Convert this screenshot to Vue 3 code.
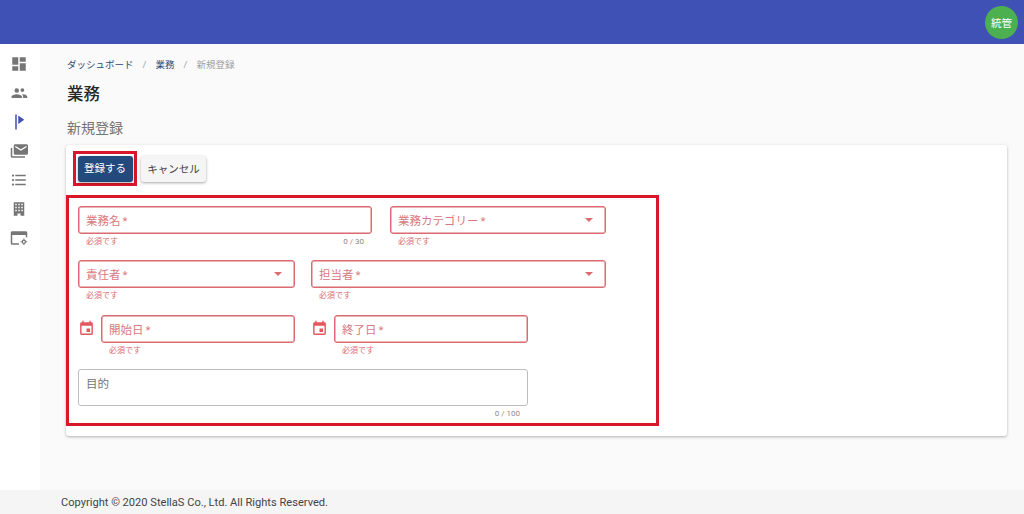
<template>
  <div class="page">
    <header class="topbar">
      <div class="avatar">統管</div>
    </header>
    <div class="body">
      <aside class="sidebar">
        <svg v-for="icon in navIcons" :key="icon.d" viewBox="0 0 24 24" class="navIcon" :class="{ active: icon.active }">
          <path :d="icon.d" />
        </svg>
      </aside>
      <main class="content">
        <nav class="crumbs">
          <a>ダッシュボード</a>
          <span class="sep">/</span>
          <a>業務</a>
          <span class="sep">/</span>
          <span class="current">新規登録</span>
        </nav>
        <h1 class="title">業務</h1>
        <h2 class="subtitle">新規登録</h2>
        <section class="card">
          <div class="actions">
            <div class="mark">
              <button class="btn primary">登録する</button>
            </div>
            <button class="btn">キャンセル</button>
          </div>
          <form class="form">
            <div v-for="(row, i) in rows" :key="i" class="row">
              <div v-for="field in row" :key="field.label" class="cell" :style="{ marginLeft: field.gap + 'px' }">
                <svg v-if="field.date" viewBox="0 0 24 24" class="calendar">
                  <path :d="calendarPath" />
                </svg>
                <div class="fieldWrap" :style="{ width: field.width + 'px' }">
                  <div class="field" :class="{ invalid: field.required, tall: field.tall }">
                    <span class="label">{{ field.label }}<em v-if="field.required">*</em></span>
                    <span v-if="field.select" class="caret"></span>
                  </div>
                  <div class="hints">
                    <span class="error">{{ field.required ? '必須です' : '' }}</span>
                    <span v-if="field.counter" class="counter">{{ field.counter }}</span>
                  </div>
                </div>
              </div>
            </div>
          </form>
        </section>
      </main>
    </div>
    <footer class="footer">Copyright © 2020 StellaS Co., Ltd. All Rights Reserved.</footer>
  </div>
</template>

<script setup>
const navIcons = [
  { d: 'M3 13h8V3H3v10zm0 8h8v-6H3v6zm10 0h8V11h-8v10zm0-18v6h8V3h-8z' },
  { d: 'M9 11.5a3 3 0 1 0 0-6 3 3 0 0 0 0 6zm7.5-1a2.500 2.500 0 1 0 0-5 2.500 2.500 0 0 0 0 5zM2 18.500V17c0-2.200 4.500-3.500 7-3.500s7 1.300 7 3.500v1.500H2zm15.500 0V17c0-1.300-.7-2.400-1.800-3.200.4-.1.800-.1 1-.1 2.300 0 6.300 1.100 6.300 3.300v1.500h-5.500z' },
  { d: 'M7 2h2v20H7V2zm12 7l-8 5.600V3.400L19 9z', active: true },
  { d: 'M22 3H7c-1.100 0-2 .9-2 2v10c0 1.100.9 2 2 2h15c1.100 0 2-.9 2-2V5c0-1.100-.9-2-2-2zm0 4l-7.500 4.800L7 7V5l7.500 4.800L22 5v2zM3 19h17v2H3c-1.100 0-2-.9-2-2V8h2v11z' },
  { d: 'M7 5h14v2H7V5zm0 8v-2h14v2H7zM4 4.500a1.500 1.500 0 1 1 0 3 1.500 1.500 0 0 1 0-3zm0 6a1.500 1.500 0 1 1 0 3 1.500 1.500 0 0 1 0-3zM7 19v-2h14v2H7zm-3-2.500a1.500 1.500 0 1 1 0 3 1.500 1.500 0 0 1 0-3z' },
  { d: 'M5 3h14v18h-5v-3h-4v3H5V3zm2 2v2h2V5H7zm4 0v2h2V5h-2zm4 0v2h2V5h-2zM7 9v2h2V9H7zm4 0v2h2V9h-2zm4 0v2h2V9h-2zM7 13v2h2v-2H7zm4 0v2h2v-2h-2zm4 0v2h2v-2h-2z' },
  { d: 'M21 3H3c-1.100 0-2 .9-2 2v14c0 1.100.9 2 2 2h9v-2H3V8h18v3h2V5c0-1.100-.9-2-2-2zm-2.500 11a3 3 0 1 0 0 6 3 3 0 0 0 0-6zm0 4.300a1.300 1.300 0 1 1 0-2.600 1.300 1.300 0 0 1 0 2.600zM17.700 12.600h1.600v1.600h-1.600zM17.700 19.800h1.600v1.600h-1.600zM14.100 16.200h1.600v1.600h-1.600zM21.300 16.200h1.600v1.600h-1.600z' }
]

const calendarPath = 'M19 19H5V8h14M16 1v2H8V1H6v2H5c-1.110 0-2 .89-2 2v14a2 2 0 0 0 2 2h14a2 2 0 0 0 2-2V5c0-1.110-.9-2-2-2h-1V1m-1 11h-5v5h5v-5z'

const rows = [
  [
    { label: '業務名', width: 294, required: true, counter: '0 / 30' },
    { label: '業務カテゴリー', width: 216, gap: 18, required: true, select: true }
  ],
  [
    { label: '責任者', width: 217, required: true, select: true },
    { label: '担当者', width: 295, gap: 16, required: true, select: true }
  ],
  [
    { label: '開始日', width: 194, required: true, date: true },
    { label: '終了日', width: 194, gap: 16, required: true, date: true }
  ],
  [
    { label: '目的', width: 450, tall: true, counter: '0 / 100' }
  ]
]
</script>

<style>
html, body {
  margin: 0;
  background: #fafafa;
}
</style>

<style scoped>
.page {
  width: 1024px;
  height: 514px;
  overflow: hidden;
  display: flex;
  flex-direction: column;
  font-family: Roboto, "Noto Sans CJK JP", sans-serif;
  background: #fafafa;
  color: rgba(0, 0, 0, 0.87);
}

.topbar {
  flex: none;
  height: 44px;
  background: #3f51b5;
  display: flex;
  align-items: center;
  justify-content: flex-end;
  padding-right: 6px;
}

.avatar {
  width: 33px;
  height: 33px;
  border-radius: 50%;
  background: #4caf50;
  color: #fff;
  font-size: 10.5px;
  display: flex;
  align-items: center;
  justify-content: center;
}

.body {
  flex: 1;
  display: flex;
  min-height: 0;
}

.sidebar {
  flex: none;
  width: 40px;
  background: #fff;
  display: flex;
  flex-direction: column;
  align-items: center;
  gap: 11px;
  padding-top: 11px;
  padding-right: 2px;
  box-sizing: border-box;
}

.navIcon {
  width: 18px;
  height: 18px;
  fill: #757575;
}

.navIcon.active {
  fill: #3f51b5;
}

.content {
  flex: 1;
  padding: 0 17px 0 26px;
}

.crumbs {
  height: 14px;
  margin-top: 14px;
  padding-left: 1px;
  display: flex;
  align-items: center;
  font-size: 9.5px;
  color: #2c4a75;
  line-height: 14px;
}

.sep {
  color: #9e9e9e;
  margin: 0 9px;
}

.current {
  color: #9e9e9e;
}

.title {
  margin: 10px 0 0;
  padding-left: 1px;
  font-size: 16.5px;
  font-weight: 500;
  line-height: 26px;
}

.subtitle {
  margin: 10px 0 0;
  padding-left: 1px;
  font-size: 14px;
  font-weight: 400;
  line-height: 20px;
  color: #757575;
}

.card {
  margin-top: 7px;
  height: 291px;
  box-sizing: border-box;
  background: #fff;
  border-radius: 3px;
  box-shadow: 0 1px 3px rgba(0, 0, 0, 0.3);
}

.actions {
  height: 50px;
  padding: 6px 0 0 7px;
  box-sizing: border-box;
  display: flex;
  align-items: flex-start;
}

.mark {
  width: 64px;
  height: 35px;
  box-sizing: border-box;
  border: 3px solid #d8172a;
  display: flex;
  align-items: center;
  justify-content: center;
}

.btn {
  height: 26px;
  margin: 5px 0 0 4px;
  padding: 0 0 2px;
  width: 65px;
  border: 0;
  border-radius: 3px;
  background: #f5f5f5;
  color: #444;
  font: 400 10.5px Roboto, "Noto Sans CJK JP", sans-serif;
  box-shadow: 0 1px 3px rgba(0, 0, 0, 0.35);
}

.btn.primary {
  margin: 0;
  width: 55px;
  background: #234a7d;
  color: #fff;
}

.form {
  width: 593px;
  height: 231px;
  box-sizing: border-box;
  border: 3px solid #d8172a;
  padding: 8px 0 0 9px;
}

.row {
  display: flex;
  height: 54.4px;
}

.cell {
  display: flex;
  align-items: flex-start;
}

.calendar {
  flex: none;
  width: 17px;
  height: 17px;
  margin: 5px 6px 0 0;
  fill: #e2585f;
}

.field {
  height: 28px;
  box-sizing: border-box;
  border: 1px solid #dc6a70;
  border-radius: 3px;
  padding: 0 8px 0 7px;
  display: flex;
  align-items: center;
  justify-content: space-between;
  font-size: 11.5px;
  background: #fff;
}

.field .label {
  color: #757575;
}

.field.invalid {
  box-shadow: inset 0 0 0 0.5px #dc6a70;
}

.field.invalid .label {
  color: #d97a80;
}

.field em {
  font-style: normal;
  margin-left: 2px;
}

.field.tall {
  height: 37px;
  border-color: #bdbdbd;
  align-items: flex-start;
  padding-top: 5px;
}

.caret {
  width: 0;
  height: 0;
  margin-right: 4px;
  border-left: 4px solid transparent;
  border-right: 4px solid transparent;
  border-top: 4px solid #dc6a70;
}

.hints {
  display: flex;
  justify-content: space-between;
  padding: 2px 8px 0 8px;
  font-size: 8px;
  line-height: 12px;
  color: #dc6a70;
}

.counter {
  color: #8a8a8a;
}

.footer {
  flex: none;
  height: 24px;
  padding-left: 61px;
  background: #f5f5f5;
  font-size: 11.1px;
  line-height: 25px;
  color: #444;
}
</style>
